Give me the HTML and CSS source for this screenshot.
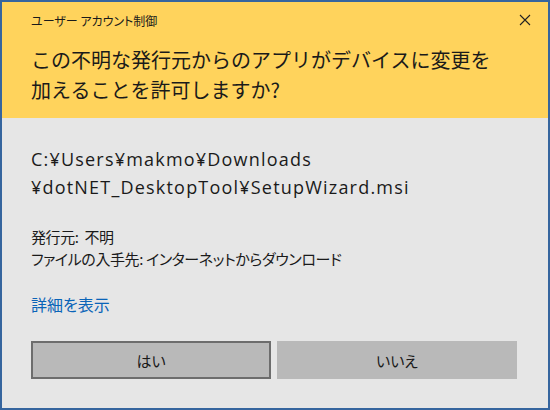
FILE: index.html
```html
<!DOCTYPE html>
<html lang="ja">
<head>
<meta charset="utf-8">
<link rel="stylesheet" href="styles.css">
</head>
<body>
<div class="dialog">
  <div class="header">
    <div class="titlebar">
      <span class="title">ユーザー アカウント制御</span>
      <span class="close">
        <svg width="12" height="12" viewBox="0 0 12 12"><path d="M1 1 L11 11 M11 1 L1 11" stroke="#222" stroke-width="1.1" fill="none"/></svg>
      </span>
    </div>
    <div class="heading">この不明な発行元からのアプリがデバイスに変更を<br>加えることを許可しますか?</div>
  </div>
  <div class="content">
    <div class="path">C:¥Users¥makmo¥Downloads<br>¥dotNET_DesktopTool¥SetupWizard.msi</div>
    <div class="info">
      <div>発行元:&nbsp; 不明</div>
      <div>ファイルの入手先: インターネットからダウンロード</div>
    </div>
    <div class="details">詳細を表示</div>
    <div class="buttons">
      <div class="btn btn-default">はい</div>
      <div class="btn">いいえ</div>
    </div>
  </div>
</div>
</body>
</html>
```
FILE: styles.css
```css
html, body {
  margin: 0;
  padding: 0;
}
body {
  font-family: "Noto Sans CJK JP", "Noto Sans", sans-serif;
  color: #1a1a1a;
}
.dialog {
  width: 550px;
  height: 410px;
  box-sizing: border-box;
  border: 2px solid #36659e;
  background: #e6e6e6;
  display: flex;
  flex-direction: column;
}
.header {
  background: #ffd35c;
  height: 116px;
  box-sizing: border-box;
  padding: 0 0 0 29px;
}
.titlebar {
  height: 36px;
  display: flex;
  align-items: center;
  justify-content: space-between;
}
.title {
  font-size: 12px;
  font-feature-settings: "palt";
}
.close {
  width: 40px;
  display: flex;
  justify-content: center;
  margin-right: 3px;
}
.close svg {
  display: block;
}
.heading {
  font-size: 20px;
  line-height: 30px;
  margin-top: 7px;
}
.content {
  flex: 1;
  padding: 27px 0 0 29px;
  display: flex;
  flex-direction: column;
}
.path {
  font-family: "Open Sans", "Noto Sans CJK JP", sans-serif;
  font-size: 18px;
  letter-spacing: 1.2px;
  line-height: 28px;
}
.info {
  margin-top: 25px;
  font-size: 15px;
  line-height: 22px;
  letter-spacing: -0.4px;
  font-feature-settings: "palt";
}
.details {
  margin-top: 23px;
  font-size: 16px;
  line-height: 22px;
  color: #0a64b8;
  font-feature-settings: "palt";
}
.buttons {
  margin-top: 26px;
  display: flex;
  gap: 6px;
}
.btn {
  width: 240px;
  height: 38px;
  box-sizing: border-box;
  background: #b9b9b9;
  border: 1px solid #b9b9b9;
  display: flex;
  align-items: center;
  justify-content: center;
  font-size: 15px;
  font-feature-settings: "palt";
}
.btn-default {
  border: 2px solid #6d6d6d;
}
```
